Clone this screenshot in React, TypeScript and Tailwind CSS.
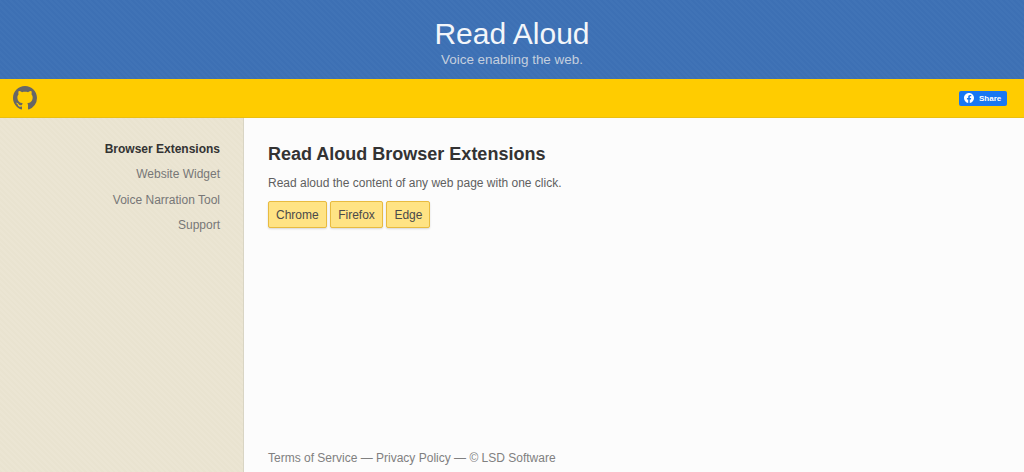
import { FC } from 'react';

const GithubMark: FC<object> = () => (
  <svg width="24" height="24" viewBox="0 0 16 16" fill="#666666">
    <path d="M8 0C3.58 0 0 3.58 0 8c0 3.54 2.29 6.53 5.47 7.59.4.07.55-.17.55-.38 0-.19-.01-.82-.01-1.49-2.01.37-2.53-.49-2.69-.94-.09-.23-.48-.94-.82-1.13-.28-.15-.68-.52-.01-.53.63-.01 1.08.58 1.23.82.72 1.21 1.87.87 2.33.66.07-.52.28-.87.51-1.07-1.78-.2-3.64-.89-3.64-3.95 0-.87.31-1.59.82-2.15-.08-.2-.36-1.02.08-2.12 0 0 .67-.21 2.2.82.64-.18 1.32-.27 2-.27s1.36.09 2 .27c1.53-1.04 2.2-.82 2.2-.82.44 1.1.16 1.92.08 2.12.51.56.82 1.27.82 2.15 0 3.07-1.87 3.75-3.65 3.95.29.25.54.73.54 1.48 0 1.07-.01 1.93-.01 2.2 0 .21.15.46.55.38A8.01 8.01 0 0 0 16 8c0-4.42-3.58-8-8-8z" />
  </svg>
);

const FacebookMark: FC<object> = () => (
  <svg width="10" height="10" viewBox="0 0 16 16" fill="#ffffff">
    <path d="M16 8.05C16 3.6 12.42 0 8 0S0 3.6 0 8.05c0 4.02 2.93 7.35 6.75 7.95v-5.62H4.72V8.05h2.03V6.28c0-2.02 1.2-3.14 3.02-3.14.88 0 1.8.16 1.8.16v1.98h-1.01c-1 0-1.31.62-1.31 1.26v1.51h2.22l-.35 2.33H9.25V16C13.07 15.4 16 12.07 16 8.05z" />
  </svg>
);

const navItems = ['Browser Extensions', 'Website Widget', 'Voice Narration Tool', 'Support'];
const buttons = ['Chrome', 'Firefox', 'Edge'];

const App: FC<object> = () => (
  <div className="flex h-[472px] flex-col overflow-hidden bg-[#fcfcfc] font-['Liberation_Sans',Arial,sans-serif] text-[#333333]">
    <header className="flex h-[79px] shrink-0 flex-col items-center bg-[#3e71b5] bg-[repeating-linear-gradient(45deg,#3d70b4_0px,#3d70b4_2px,#4073b6_2px,#4073b6_4px)] pt-[16px] text-center">
      <h1 className="text-[30px] leading-[36px] font-normal text-[#f3f6fa]">Read Aloud</h1>
      <p className="text-[13.45px] leading-[16px] text-[#c4cfde]">Voice enabling the web.</p>
    </header>

    <div className="flex h-[39px] shrink-0 items-center justify-between border-b border-[#eabf10] bg-[#ffcc00] pr-[17px] pl-[13px]">
      <GithubMark />
      <a className="flex h-[15px] w-[48px] items-center gap-[5px] rounded-[2px] bg-[#1877f2] pl-[5px] text-[8px] leading-[15px] font-bold text-white">
        <FacebookMark />
        Share
      </a>
    </div>

    <div className="flex min-h-0 flex-1">
      <nav className="flex w-[244px] shrink-0 flex-col items-end border-r border-[#d9d5c4] bg-[#e9e3cf] bg-[repeating-linear-gradient(45deg,#e9e3d0_0px,#e9e3d0_2px,#ebe5d3_2px,#ebe5d3_4px)] pt-[18.5px] pr-[23px] text-[12px]">
        {navItems.map((item, index) => (
          <a key={item} className={`h-[25.5px] leading-[25.5px] ${index === 0 ? 'font-bold text-[#333333]' : 'text-[#777777]'}`}>
            {item}
          </a>
        ))}
      </nav>

      <main className="flex flex-1 flex-col pt-[24px] pl-[24px]">
        <h2 className="text-[18px] leading-[24px] font-bold text-[#333333]">Read Aloud Browser Extensions</h2>
        <p className="mt-[8px] text-[12px] leading-[18px] text-[#5f5f5f]">Read aloud the content of any web page with one click.</p>
        <div className="mt-[9px] flex gap-[3.5px]">
          {buttons.map((label) => (
            <button
              key={label}
              className="h-[27px] rounded-[2px] border border-[#e8bb40] bg-[#ffe384] px-[7px] text-[12px] text-[#4a4a4a] shadow-[0_1px_2px_rgba(0,0,0,0.15)]"
            >
              {label}
            </button>
          ))}
        </div>
        <footer className="mt-auto pb-[6px] text-[12px] leading-[16px] text-[#808080]">
          Terms of Service — Privacy Policy — © LSD Software
        </footer>
      </main>
    </div>
  </div>
);

export default App;
